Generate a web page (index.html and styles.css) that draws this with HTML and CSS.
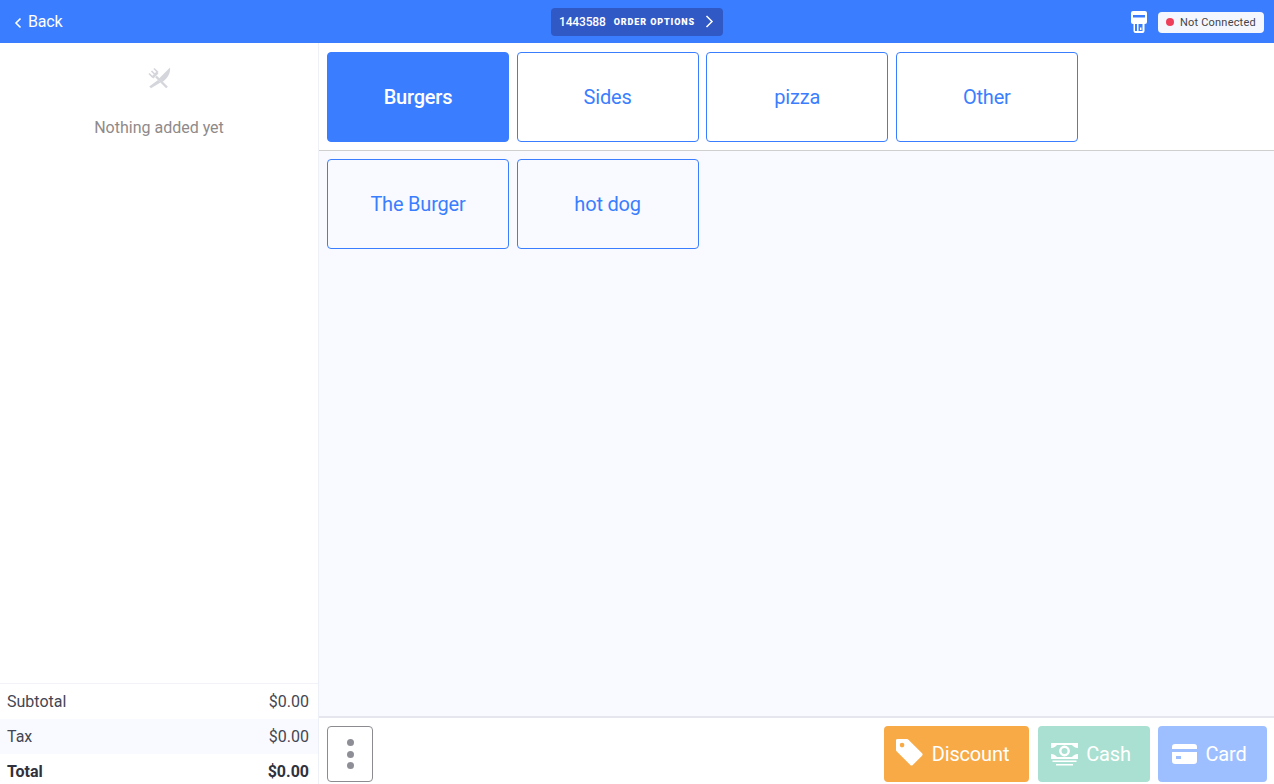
FILE: index.html
```html
<!DOCTYPE html>
<html lang="en">
<head>
    <meta charset="UTF-8">
    <title>Order</title>
    <link rel="stylesheet" href="styles.css">
</head>
<body>
    <header class="topbar">
        <div class="topbar-left">
            <a class="back-link">
                <svg class="back-icon" width="8" height="12" viewBox="0 0 8 12"><path d="M6.500 1.500L2 6l4.500 4.500" fill="none" stroke="#fff" stroke-width="1.600"/></svg>
                Back
            </a>
        </div>
        <div class="order-pill">
            <span class="order-num">1443588</span>
            <span class="order-label">ORDER OPTIONS</span>
            <svg class="order-arrow" width="9" height="13" viewBox="0 0 9 13"><path d="M1.500 1l5.500 5.500L1.500 12" fill="none" stroke="#fff" stroke-width="1.500"/></svg>
        </div>
        <div class="topbar-right">
            <svg width="16" height="22" viewBox="0 0 16 22"><path fill-rule="evenodd" fill="#fff" d="M2 0h12a2 2 0 0 1 2 2v9a2 2 0 0 1-2 2h-.5v7a2 2 0 0 1-2 2h-7a2 2 0 0 1-2-2v-7H2a2 2 0 0 1-2-2V2a2 2 0 0 1 2-2zM2 4v2.500h12V4zM4 13v7h2v-7zM7.500 13v7h4v-7zM9 16.500h1.500V19H9z"/></svg>
            <div class="status-pill"><span class="status-dot"></span>Not Connected</div>
        </div>
    </header>

    <main class="content">
        <aside class="sidebar">
            <div class="empty-cart">
                <svg width="24" height="22" viewBox="0 0 24 22">
                    <g fill="none" stroke="#d5d6dc">
                        <path stroke-width="2.400" d="M9 9.500L20 20.500"/>
                        <path stroke-width="1.700" d="M2 6.500L6 10.500M4.500 4L8.500 8M7 1.500L11 5.500"/>
                        <path stroke-width="2.600" d="M5.500 10.500L10.500 5.500"/>
                    </g>
                    <path fill="#d5d6dc" d="M23 0.500C23.800 6 20.500 11.500 15.500 15L12 11.500zM11 13l2.500 2.500-9.500 5.800-1.800-1.800z"/>
                </svg>
                <p class="empty-text">Nothing added yet</p>
            </div>
            <div class="totals">
                <div class="totals-row"><span>Subtotal</span><span>$0.00</span></div>
                <div class="totals-row shaded"><span>Tax</span><span>$0.00</span></div>
                <div class="totals-row total"><span>Total</span><span>$0.00</span></div>
            </div>
        </aside>

        <section class="menu">
            <div class="categories">
                <button class="tile active">Burgers</button>
                <button class="tile">Sides</button>
                <button class="tile">pizza</button>
                <button class="tile">Other</button>
            </div>
            <div class="items">
                <button class="tile item">The Burger</button>
                <button class="tile item">hot dog</button>
            </div>
            <div class="actions">
                <button class="more-btn"><span></span><span></span><span></span></button>
                <div class="pay-buttons">
                    <button class="pay-btn discount">
                        <svg width="27" height="27" viewBox="0 0 29 29"><path fill="#fff" fill-rule="evenodd" d="M1.500 0h10.200c.6 0 1 .2 1.400.6l14.900 14.800c.8.800.8 1.800 0 2.600L18 27.900c-.8.800-1.900.8-2.600 0L.6 13.200C.2 12.800 0 12.300 0 11.800V1.500C0 .6.600 0 1.500 0zM6.500 4a2.500 2.500 0 1 0 0 5 2.500 2.500 0 0 0 0-5z"/></svg>
                        Discount
                    </button>
                    <button class="pay-btn cash">
                        <svg width="27" height="23" viewBox="0 0 27 23">
                            <path fill="#fff" d="M0 0H27V5C24 5 22 3.500 21 2H6C5 3.500 3 5 0 5zM0 11C3 11 5 12.500 6 14H21C22 12.500 24 11 27 11V16H0zM1.500 17.500h24V19h-24zM5 21h17v1.500H5z"/>
                            <circle cx="13.500" cy="8" r="4.200" fill="none" stroke="#fff" stroke-width="2.400"/>
                        </svg>
                        Cash
                    </button>
                    <button class="pay-btn card">
                        <svg width="25" height="20" viewBox="0 0 25 20"><path fill="#fff" fill-rule="evenodd" d="M3 0h19a3 3 0 0 1 3 3v2H0V3a3 3 0 0 1 3-3zM0 8h25v9a3 3 0 0 1-3 3H3a3 3 0 0 1-3-3zM4 12v3h5v-3z"/></svg>
                        Card
                    </button>
                </div>
            </div>
        </section>
    </main>
</body>
</html>
```

FILE: styles.css
```css
* {
    box-sizing: border-box;
}
html, body {
    height: 100%;
}
body {
    margin: 0;
    height: 784px;
    overflow: hidden;
    display: flex;
    flex-direction: column;
    font-family: Roboto, "Liberation Sans", sans-serif;
    background: #fff;
}
button {
    font-family: inherit;
    cursor: pointer;
}

.topbar {
    height: 43px;
    flex-shrink: 0;
    display: flex;
    align-items: center;
    justify-content: space-between;
    background: #3a7eff;
    color: #fff;
    padding: 0 10px 0 14px;
}
.topbar-left, .topbar-right {
    display: flex;
    align-items: center;
}
.topbar-left {
    width: 300px;
}
.topbar-right {
    width: 304px;
    justify-content: flex-end;
    gap: 11px;
}
.back-link {
    display: flex;
    align-items: center;
    gap: 6px;
    font-size: 16px;
    letter-spacing: -0.15px;
}
.back-icon {
    margin-top: 2px;
}
.order-pill {
    width: 172px;
    height: 28px;
    display: flex;
    align-items: center;
    padding: 0 9px 0 8px;
    background: #3159c6;
    border-radius: 4px;
    white-space: nowrap;
}
.order-num {
    font-size: 12px;
    font-weight: 500;
    letter-spacing: -0.15px;
    margin-right: 8px;
}
.order-label {
    font-size: 9px;
    font-weight: 900;
    letter-spacing: 0.9px;
}
.order-arrow {
    margin-left: auto;
    flex-shrink: 0;
}
.status-pill {
    width: 106px;
    height: 21px;
    margin-top: 1px;
    display: flex;
    align-items: center;
    padding-left: 8px;
    background: #f5f7ff;
    border-radius: 4px;
    color: #444;
    font-size: 11px;
    letter-spacing: 0.2px;
}
.status-dot {
    width: 8px;
    height: 8px;
    margin-right: 6px;
    border-radius: 50%;
    background: #ef3e5a;
}

.content {
    flex: 1;
    display: flex;
    min-height: 0;
}
.sidebar {
    width: 319px;
    flex-shrink: 0;
    display: flex;
    flex-direction: column;
    border-right: 1px solid #eef0f8;
}
.empty-cart {
    flex: 1;
    display: flex;
    flex-direction: column;
    align-items: center;
    padding-top: 24px;
}
.empty-text {
    margin: 29px 0 0;
    font-size: 16px;
    color: #8f8a8a;
}
.totals {
    border-top: 1px solid #f2f3f9;
}
.totals-row {
    height: 35px;
    display: flex;
    align-items: center;
    justify-content: space-between;
    padding: 0 9px 0 7px;
    font-size: 16px;
    color: #444652;
}
.totals-row.shaded {
    background: #f9faff;
}
.totals-row.total {
    height: 30px;
    padding-top: 5px;
    font-weight: 700;
    color: #30323d;
}

.menu {
    flex: 1;
    display: flex;
    flex-direction: column;
    min-width: 0;
}
.categories {
    height: 108px;
    flex-shrink: 0;
    display: flex;
    gap: 7.6px;
    padding: 9px 8px;
    border-bottom: 1px solid #cfcfcf;
}
.items {
    flex: 1;
    display: flex;
    align-items: flex-start;
    gap: 7.6px;
    padding: 8px;
    background: #f9faff;
}
.tile {
    width: 182px;
    height: 90px;
    border: 1px solid #3a7eff;
    border-radius: 4px;
    background: #fff;
    color: #3a7eff;
    font-size: 20px;
    letter-spacing: -0.2px;
}
.tile.active {
    background: #3a7eff;
    color: #fff;
    font-weight: 500;
}
.tile.item {
    background: #f9faff;
}

.actions {
    height: 68px;
    flex-shrink: 0;
    display: flex;
    align-items: flex-start;
    justify-content: space-between;
    padding: 8px 7px 0 8px;
    border-top: 2px solid #e6e7ee;
}
.more-btn {
    width: 46px;
    height: 56px;
    display: flex;
    flex-direction: column;
    align-items: center;
    justify-content: center;
    gap: 4.5px;
    padding: 0;
    background: #fff;
    border: 1px solid #8c8c90;
    border-radius: 4px;
}
.more-btn span {
    width: 7px;
    height: 7px;
    border-radius: 50%;
    background: #8e8e96;
}
.pay-buttons {
    display: flex;
    gap: 9px;
}
.pay-btn {
    height: 56px;
    display: flex;
    align-items: center;
    justify-content: center;
    border: none;
    border-radius: 4px;
    color: #fff;
    font-size: 20px;
    letter-spacing: -0.15px;
    padding: 0 6px 0 0;
    gap: 8px;
}
.discount {
    width: 145px;
    gap: 9px;
    padding-right: 8px;
    background: #f8aa46;
}
.discount svg {
    margin-top: -4px;
}
.cash {
    width: 112px;
    background: #aae0d1;
    margin-right: -1px;
}
.card {
    width: 109px;
    background: #9ebfff;
}
```
